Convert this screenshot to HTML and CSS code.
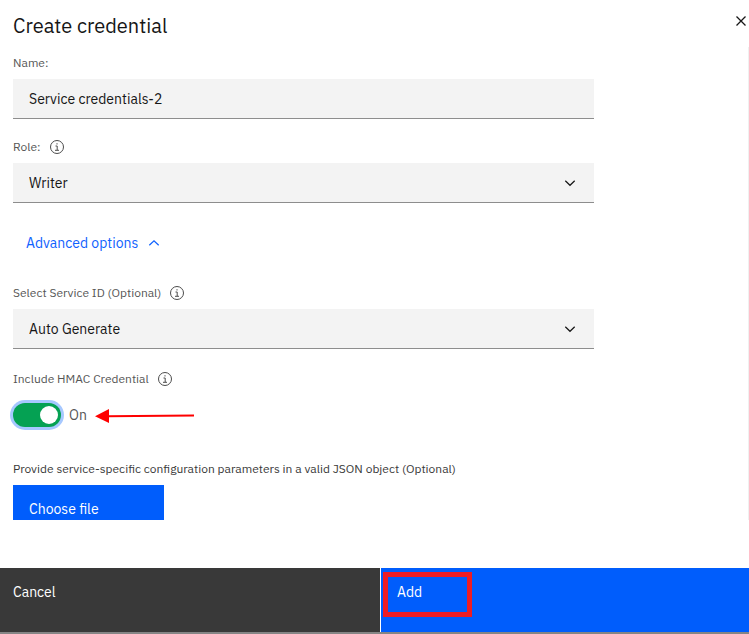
FILE: index.html
```
<!DOCTYPE html>
<html lang="en">
<head>
<meta charset="utf-8">
<meta name="viewport" content="width=device-width, initial-scale=1">
<title>Create credential</title>
<link rel="stylesheet" href="styles.css">
</head>
<body>
<form class="panel">
	<header class="panel-header">
		<h1>Create credential</h1>
		<button type="button" class="close" aria-label="Close">
			<svg width="16" height="16" viewBox="0 0 16 16"><path d="M3.5 3.5l9 9M12.5 3.5l-9 9"/></svg>
		</button>
	</header>

	<div class="panel-body">
		<div class="field">
			<label for="name">Name:</label>
			<input type="text" class="control" id="name" value="Service credentials-2">
		</div>

		<div class="field">
			<div class="label-row">
				<label for="role">Role:</label>
				<button type="button" class="info" aria-label="About role">
					<svg width="16" height="16" viewBox="0 0 16 16"><circle cx="8" cy="8" r="6.5"/><path d="M6.5 7h1.7v4M6 11.3h4M8 4.2v1.3"/></svg>
				</button>
			</div>
			<div class="select">
				<select class="control" id="role"><option>Writer</option></select>
				<svg class="chevron" width="16" height="16" viewBox="0 0 16 16"><path d="M3.3 5.8L8 10.3l4.7-4.5"/></svg>
			</div>
		</div>

		<button type="button" class="advanced-toggle" aria-expanded="true">
			Advanced options
			<svg width="16" height="16" viewBox="0 0 16 16"><path d="M3.3 10.3L8 5.8l4.7 4.5"/></svg>
		</button>

		<div class="advanced">
			<div class="field">
				<div class="label-row">
					<label for="service">Select Service ID (Optional)</label>
					<button type="button" class="info" aria-label="About service ID">
						<svg width="16" height="16" viewBox="0 0 16 16"><circle cx="8" cy="8" r="6.5"/><path d="M6.5 7h1.7v4M6 11.3h4M8 4.2v1.3"/></svg>
					</button>
				</div>
				<div class="select">
					<select class="control" id="service"><option>Auto Generate</option></select>
					<svg class="chevron" width="16" height="16" viewBox="0 0 16 16"><path d="M3.3 5.8L8 10.3l4.7-4.5"/></svg>
				</div>
			</div>

			<div class="field switch-field">
				<div class="label-row">
					<label for="hmac">Include HMAC Credential</label>
					<button type="button" class="info" aria-label="About HMAC credential">
						<svg width="16" height="16" viewBox="0 0 16 16"><circle cx="8" cy="8" r="6.5"/><path d="M6.5 7h1.7v4M6 11.3h4M8 4.2v1.3"/></svg>
					</button>
				</div>
				<div class="switch-row">
					<input type="checkbox" role="switch" class="switch" id="hmac" checked>
					<span class="switch-state">On</span>
					<svg class="arrow" width="100" height="16" viewBox="0 0 100 16"><path class="shaft" d="M12 9.2L99 8.4"/><path class="head" d="M0 9.2L14 2v14z"/></svg>
				</div>
			</div>

			<div class="field">
				<label class="config-label" for="config">Provide service-specific configuration parameters in a valid JSON object (Optional)</label>
				<button type="button" class="choose" id="config">Choose file</button>
			</div>
		</div>
	</div>

	<footer class="panel-footer">
		<button type="button" class="cancel">Cancel</button>
		<button type="submit" class="add">Add<span class="highlight"></span></button>
	</footer>
</form>
</body>
</html>
```
FILE: styles.css
```
* {
	box-sizing: border-box;
}
body {
	margin: 0;
	background: #fff;
	color: #161616;
	font: 14px/20px "IBM Plex Sans", "Open Sans", "Noto Sans", sans-serif;
}
button, input, select {
	font: inherit;
	color: inherit;
	border: 0;
	border-radius: 0;
	margin: 0;
	padding: 0;
}
button {
	background: none;
	cursor: pointer;
	text-align: left;
}
svg {
	display: block;
	fill: none;
	stroke: currentColor;
}

.panel {
	display: flex;
	flex-direction: column;
	height: 100vh;
}
.panel-header {
	display: flex;
	justify-content: space-between;
	align-items: flex-start;
	padding: 13px 0 8px 13px;
}
.panel-header h1 {
	margin: 0;
	font-size: 20px;
	line-height: 26px;
	font-weight: 400;
}
.close svg {
	stroke-width: 1.3;
}

.panel-body {
	flex: 1;
	min-height: 0;
	overflow: hidden;
	display: flex;
	flex-direction: column;
	gap: 20px;
	margin-bottom: 48px;
	padding: 8px 0 0 13px;
	border-right: 1px solid #f0f0f0;
}
.advanced {
	display: flex;
	flex-direction: column;
	gap: 22px;
	padding-top: 2px;
}
.panel-body > *, .advanced > * {
	flex-shrink: 0;
}
.field {
	display: flex;
	flex-direction: column;
	align-items: flex-start;
	gap: 8px;
}
.label-row {
	display: flex;
	align-items: center;
	gap: 8px;
	height: 16px;
}
.field label {
	font-size: 12px;
	line-height: 16px;
	color: #565656;
}
.field .config-label {
	color: #393939;
}
.info {
	color: #4c4c4c;
}
.control {
	width: 79%;
	height: 40px;
	padding: 0 16px;
	background: #f3f3f3;
	border-bottom: 1px solid #8d8d8d;
	appearance: none;
	outline: none;
}
.select {
	position: relative;
	width: 79%;
}
.select .control {
	display: block;
	width: 100%;
}
.chevron {
	position: absolute;
	top: 12px;
	right: 16px;
	stroke-width: 1.2;
	pointer-events: none;
}
.advanced-toggle {
	display: flex;
	align-items: center;
	align-self: flex-start;
	gap: 8px;
	height: 40px;
	padding-left: 13px;
	color: #0f62fe;
}
.advanced-toggle svg {
	stroke-width: 1.2;
}

/* on/off switch */
.switch-field {
	gap: 16px;
	padding-bottom: 12px;
}
.switch-row {
	display: flex;
	align-items: center;
	gap: 8px;
	color: #565656;
}
.switch {
	appearance: none;
	display: flex;
	align-items: center;
	width: 48px;
	height: 24px;
	padding: 3px;
	border-radius: 12px;
	background: #8d8d8d;
	box-shadow: 0 0 0 3px #a6c8ff;
}
.switch::before {
	content: "";
	width: 18px;
	height: 18px;
	border-radius: 50%;
	background: #fff;
}
.switch:checked {
	justify-content: flex-end;
	background: #05a153;
}
.arrow .shaft {
	stroke: #fe0000;
	stroke-width: 2;
}
.arrow .head {
	fill: #fe0000;
	stroke: none;
}
.choose {
	width: 151px;
	height: 48px;
	padding: 0 16px;
	background: #005dfc;
	color: #fff;
}

.panel-footer {
	display: grid;
	grid-template-columns: 380fr 368fr;
	gap: 1px;
	border-bottom: 2px solid #858585;
}
.panel-footer button {
	position: relative;
	display: flex;
	height: 64px;
	padding: 14px 16px;
	color: #fff;
}
.panel-footer .cancel {
	padding-left: 13px;
	background: #393939;
}
.panel-footer .add {
	background: #005dfc;
}
.highlight {
	position: absolute;
	top: 4px;
	left: 2px;
	width: 89px;
	height: 45px;
	border: 5px solid #ed1c24;
}
```
